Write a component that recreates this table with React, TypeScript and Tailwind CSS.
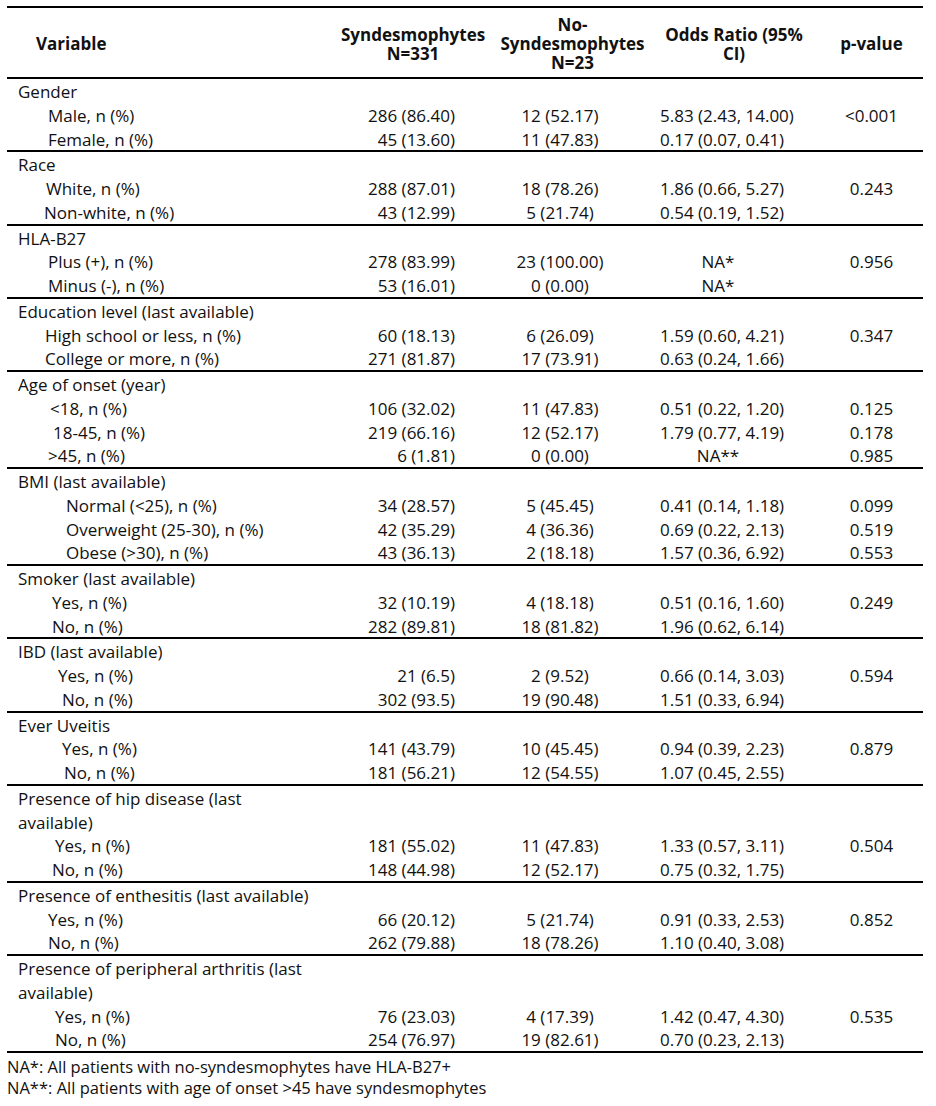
import type { ReactNode } from 'react'

type Item = { label: string; indent: string; a: string; b: string; or: string; p?: string }
type Group = { title: string[]; items: Item[] }

// Table of baseline characteristics, syndesmophytes vs no-syndesmophytes.
const groups: Group[] = [
  {
    title: ['Gender'],
    items: [
      { label: 'Male, n (%)', indent: 'pl-[41px]', a: '286 (86.40)', b: '12 (52.17)', or: '5.83 (2.43, 14.00)', p: '<0.001' },
      { label: 'Female, n (%)', indent: 'pl-[41px]', a: '45 (13.60)', b: '11 (47.83)', or: '0.17 (0.07, 0.41)' },
    ],
  },
  {
    title: ['Race'],
    items: [
      { label: 'White, n (%)', indent: 'pl-[39px]', a: '288 (87.01)', b: '18 (78.26)', or: '1.86 (0.66, 5.27)', p: '0.243' },
      { label: 'Non-white, n (%)', indent: 'pl-[37px]', a: '43 (12.99)', b: '5 (21.74)', or: '0.54 (0.19, 1.52)' },
    ],
  },
  {
    title: ['HLA-B27'],
    items: [
      { label: 'Plus (+), n (%)', indent: 'pl-[41px]', a: '278 (83.99)', b: '23 (100.00)', or: 'NA*', p: '0.956' },
      { label: 'Minus (-), n (%)', indent: 'pl-[41px]', a: '53 (16.01)', b: '0 (0.00)', or: 'NA*' },
    ],
  },
  {
    title: ['Education level (last available)'],
    items: [
      { label: 'High school or less, n (%)', indent: 'pl-[38px]', a: '60 (18.13)', b: '6 (26.09)', or: '1.59 (0.60, 4.21)', p: '0.347' },
      { label: 'College or more, n (%)', indent: 'pl-[38px]', a: '271 (81.87)', b: '17 (73.91)', or: '0.63 (0.24, 1.66)' },
    ],
  },
  {
    title: ['Age of onset (year)'],
    items: [
      { label: '<18, n (%)', indent: 'pl-[43px]', a: '106 (32.02)', b: '11 (47.83)', or: '0.51 (0.22, 1.20)', p: '0.125' },
      { label: '18-45, n (%)', indent: 'pl-[46px]', a: '219 (66.16)', b: '12 (52.17)', or: '1.79 (0.77, 4.19)', p: '0.178' },
      { label: '>45, n (%)', indent: 'pl-[41px]', a: '6 (1.81)', b: '0 (0.00)', or: 'NA**', p: '0.985' },
    ],
  },
  {
    title: ['BMI (last available)'],
    items: [
      { label: 'Normal (<25), n (%)', indent: 'pl-[59px]', a: '34 (28.57)', b: '5 (45.45)', or: '0.41 (0.14, 1.18)', p: '0.099' },
      { label: 'Overweight (25-30), n (%)', indent: 'pl-[59px]', a: '42 (35.29)', b: '4 (36.36)', or: '0.69 (0.22, 2.13)', p: '0.519' },
      { label: 'Obese (>30), n (%)', indent: 'pl-[59px]', a: '43 (36.13)', b: '2 (18.18)', or: '1.57 (0.36, 6.92)', p: '0.553' },
    ],
  },
  {
    title: ['Smoker (last available)'],
    items: [
      { label: 'Yes, n (%)', indent: 'pl-[45px]', a: '32 (10.19)', b: '4 (18.18)', or: '0.51 (0.16, 1.60)', p: '0.249' },
      { label: 'No, n (%)', indent: 'pl-[45px]', a: '282 (89.81)', b: '18 (81.82)', or: '1.96 (0.62, 6.14)' },
    ],
  },
  {
    title: ['IBD (last available)'],
    items: [
      { label: 'Yes, n (%)', indent: 'pl-[51px]', a: '21 (6.5)', b: '2 (9.52)', or: '0.66 (0.14, 3.03)', p: '0.594' },
      { label: 'No, n (%)', indent: 'pl-[55px]', a: '302 (93.5)', b: '19 (90.48)', or: '1.51 (0.33, 6.94)' },
    ],
  },
  {
    title: ['Ever Uveitis'],
    items: [
      { label: 'Yes, n (%)', indent: 'pl-[55px]', a: '141 (43.79)', b: '10 (45.45)', or: '0.94 (0.39, 2.23)', p: '0.879' },
      { label: 'No, n (%)', indent: 'pl-[57px]', a: '181 (56.21)', b: '12 (54.55)', or: '1.07 (0.45, 2.55)' },
    ],
  },
  {
    title: ['Presence of hip disease (last', 'available)'],
    items: [
      { label: 'Yes, n (%)', indent: 'pl-[48px]', a: '181 (55.02)', b: '11 (47.83)', or: '1.33 (0.57, 3.11)', p: '0.504' },
      { label: 'No, n (%)', indent: 'pl-[45px]', a: '148 (44.98)', b: '12 (52.17)', or: '0.75 (0.32, 1.75)' },
    ],
  },
  {
    title: ['Presence of enthesitis (last available)'],
    items: [
      { label: 'Yes, n (%)', indent: 'pl-[41px]', a: '66 (20.12)', b: '5 (21.74)', or: '0.91 (0.33, 2.53)', p: '0.852' },
      { label: 'No, n (%)', indent: 'pl-[41px]', a: '262 (79.88)', b: '18 (78.26)', or: '1.10 (0.40, 3.08)' },
    ],
  },
  {
    title: ['Presence of peripheral arthritis (last', 'available)'],
    items: [
      { label: 'Yes, n (%)', indent: 'pl-[48px]', a: '76 (23.03)', b: '4 (17.39)', or: '1.42 (0.47, 4.30)', p: '0.535' },
      { label: 'No, n (%)', indent: 'pl-[48px]', a: '254 (76.97)', b: '19 (82.61)', or: '0.70 (0.23, 2.13)' },
    ],
  },
]

function Cells({ first, a, b, or, p }: { first: ReactNode; a?: string; b?: string; or?: string; p?: string }) {
  return (
    <div className="flex h-[23.75px] items-center whitespace-nowrap pt-[2px]">
      <div className="w-[328px]">{first}</div>
      <div className="w-[150px] pr-[30px] text-right">{a}</div>
      <div className="w-[175px] pr-[25px] text-center">{b}</div>
      <div className="w-[148px] pr-[32px] text-center">{or}</div>
      <div className="w-[115px] pl-[12px] text-center">{p}</div>
    </div>
  )
}

function Header() {
  return (
    <div className="flex h-[73px] items-center border-y-2 border-black pt-[2px] font-bold leading-[19px]">
      <div className="w-[328px] pl-[29px]">Variable</div>
      <div className="w-[150px] pl-[6px] text-center">
        Syndesmophytes
        <br />
        N=331
      </div>
      <div className="w-[175px] text-center">
        No-
        <br />
        Syndesmophytes
        <br />
        N=23
      </div>
      <div className="w-[148px] text-center">
        Odds Ratio (95%
        <br />
        CI)
      </div>
      <div className="w-[115px] pl-[12px] text-center">p-value</div>
    </div>
  )
}

export default function App() {
  return (
    <div className="min-h-[1106px] w-[936px] bg-white pt-[6px] text-[17px] text-[#111] [font-family:'Open_Sans','Liberation_Sans',sans-serif]">
      <div className="ml-[7px] w-[916px]">
        <Header />
        {groups.map((g) => (
          <div key={g.title[0]} className="border-b-2 border-black">
            {g.title.map((t) => (
              <Cells key={t} first={<span className="pl-[11px]">{t}</span>} />
            ))}
            {g.items.map((it) => (
              <Cells
                key={it.label}
                first={<span className={it.indent}>{it.label}</span>}
                a={it.a}
                b={it.b}
                or={it.or}
                p={it.p}
              />
            ))}
          </div>
        ))}
      </div>
      <div className="pl-[7px] pt-[3px] text-[16.5px] leading-[21px]">
        <div>NA*: All patients with no-syndesmophytes have HLA-B27+</div>
        <div>NA**: All patients with age of onset &gt;45 have syndesmophytes</div>
      </div>
    </div>
  )
}
